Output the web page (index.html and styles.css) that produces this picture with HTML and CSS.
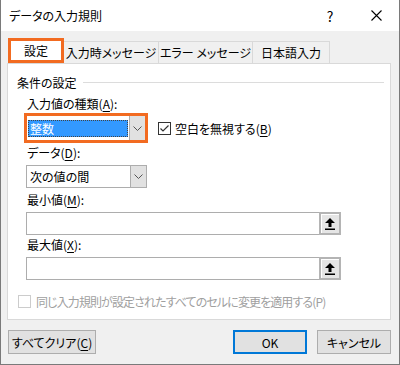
FILE: index.html
```html
<!DOCTYPE html>
<html lang="ja">
<head>
    <meta charset="UTF-8">
    <title>データの入力規則</title>
    <link rel="stylesheet" href="styles.css">
</head>
<body>
    <div class="window">
        <!-- Title bar -->
        <div class="titlebar">
            <div class="title">データの入力規則</div>
            <div class="tb-btn">?</div>
            <div class="tb-btn">
                <svg width="11" height="11" viewBox="0 0 11 11"><path d="M0.5 0.5 L10.5 10.5 M10.5 0.5 L0.5 10.5" stroke="#000" stroke-width="1.1" fill="none"/></svg>
            </div>
        </div>

        <div class="dialog">
            <!-- Tabs -->
            <div class="tabs">
                <div class="tab active">設定</div>
                <div class="tab w1">入力時メッセージ</div>
                <div class="tab w2">エラー メッセージ</div>
                <div class="tab w3">日本語入力</div>
            </div>

            <!-- Tab panel -->
            <div class="panel">
                <div class="legend">
                    <span>条件の設定</span>
                    <div class="rule"></div>
                </div>

                <div class="label">入力値の種類(<u>A</u>):</div>
                <div class="combo-row">
                    <div class="highlight">
                        <div class="combo">
                            <div class="value"><span class="sel">整数</span></div>
                            <div class="drop">
                                <svg width="9" height="5" viewBox="0 0 9 5"><path d="M0.5 0.5 L4.5 4.5 L8.5 0.5" stroke="#555" fill="none"/></svg>
                            </div>
                        </div>
                    </div>
                    <div class="check">
                        <svg width="13" height="13" viewBox="0 0 13 13"><rect x="0.5" y="0.5" width="12" height="12" fill="#fff" stroke="#333"/><path d="M2.5 6.5 L5 9 L10.5 3.5" stroke="#333" stroke-width="1.2" fill="none"/></svg>
                    </div>
                    <span class="check-text">空白を無視する(<u>B</u>)</span>
                </div>

                <div class="label gap-s">データ(<u>D</u>):</div>
                <div class="combo plain">
                    <div class="value">次の値の間</div>
                    <div class="drop">
                        <svg width="9" height="5" viewBox="0 0 9 5"><path d="M0.5 0.5 L4.5 4.5 L8.5 0.5" stroke="#555" fill="none"/></svg>
                    </div>
                </div>

                <div class="label gap-m">最小値(<u>M</u>):</div>
                <div class="ref-input">
                    <div class="field"></div>
                    <div class="ref-btn">
                        <svg width="10" height="12" viewBox="0 0 10 12"><path d="M5 0 L10 5 L6.5 5 L6.5 9 L3.5 9 L3.5 5 L0 5 Z" fill="#000"/><rect x="0" y="10.5" width="10" height="1.5" fill="#000"/></svg>
                    </div>
                </div>

                <div class="label gap-s">最大値(<u>X</u>):</div>
                <div class="ref-input">
                    <div class="field"></div>
                    <div class="ref-btn">
                        <svg width="10" height="12" viewBox="0 0 10 12"><path d="M5 0 L10 5 L6.5 5 L6.5 9 L3.5 9 L3.5 5 L0 5 Z" fill="#000"/><rect x="0" y="10.5" width="10" height="1.5" fill="#000"/></svg>
                    </div>
                </div>

                <div class="apply-row">
                    <div class="box-off"></div>
                    <span class="apply-text">同じ入力規則が設定されたすべてのセルに変更を適用する(P)</span>
                </div>
            </div>

            <!-- Buttons -->
            <div class="footer">
                <button class="btn wide">すべてクリア(<u>C</u>)</button>
                <div class="spacer"></div>
                <button class="btn default">OK</button>
                <button class="btn">キャンセル</button>
            </div>
        </div>
    </div>
</body>
</html>
```

FILE: styles.css
```css
body {
    margin: 0;
    font-family: "Noto Sans CJK JP", "Noto Sans", sans-serif;
    font-size: 12px;
    font-feature-settings: "palt";
    color: #000;
}

u {
    text-decoration: underline;
    text-underline-offset: 2px;
}

/* Window frame */
.window {
    width: 400px;
    height: 365px;
    box-sizing: border-box;
    border: 1px solid #7a7a7a;
    border-top: none;
    background-color: #f0f0f0;
}

.titlebar {
    height: 31px;
    background-color: #fff;
    display: flex;
    align-items: center;
}

.title {
    flex: 1;
    padding-left: 8px;
    font-size: 12px;
}

.tb-btn {
    width: 46px;
    height: 31px;
    display: flex;
    align-items: center;
    justify-content: center;
    font-size: 14px;
}

.dialog {
    padding: 0 8px 0 6px;
}

/* Tabs */
.tabs {
    display: flex;
    align-items: flex-end;
    height: 25px;
    margin-top: 7px;
    padding-left: 1px;
}

.tab {
    height: 22px;
    box-sizing: border-box;
    border: 1px solid #d9d9d9;
    border-bottom: none;
    margin-left: -1px;
    display: flex;
    align-items: center;
    justify-content: center;
    background-color: #f0f0f0;
}

.tab.active {
    width: 56px;
    height: 25px;
    margin-left: 0;
    border: 3px solid #f26b21;
    background-color: #fff;
    position: relative;
    z-index: 1;
}

.tab.w1 { width: 96px; }
.tab.w2 { width: 95px; }
.tab.w3 { width: 78px; }

/* Panel */
.panel {
    height: 257px;
    box-sizing: border-box;
    background-color: #fff;
    border: 1px solid #d9d9d9;
    padding-left: 1px;
}

.legend {
    display: flex;
    align-items: center;
    height: 14px;
    margin-top: 11px;
    padding-left: 8px;
}

.rule {
    flex: 1;
    height: 1px;
    background-color: #dcdcdc;
    margin: 0 6px 0 6px;
}

.label {
    height: 14px;
    line-height: 14px;
    margin-top: 8px;
    padding-left: 18px;
}

.label.gap-s { margin-top: 3px; }
.label.gap-m { margin-top: 5px; }

.combo-row {
    display: flex;
    align-items: center;
    margin-top: 2px;
    margin-left: 15px;
}

.highlight {
    border: 3px solid #f26b21;
    padding: 0;
}

.combo {
    display: flex;
    width: 118px;
    height: 24px;
    box-sizing: border-box;
    background-color: #fff;
}

.combo .value {
    flex: 1;
    display: flex;
    align-items: center;
    padding: 0 1px;
}

.sel {
    display: block;
    width: 100%;
    height: 17px;
    line-height: 17px;
    background-color: #3399ff;
    color: #fff;
    padding-left: 2px;
    outline: 1px dotted #444;
    outline-offset: -1px;
}

.drop {
    width: 15px;
    display: flex;
    align-items: center;
    justify-content: center;
    background-color: #e1e1e1;
    border-left: 1px solid #adadad;
}

.combo.plain {
    width: 121px;
    height: 23px;
    margin: 5px 0 0 17px;
    border: 1px solid #adadad;
}

.combo.plain .value {
    padding-left: 3px;
}

.check {
    display: flex;
    margin-left: 10px;
}

.check-text {
    margin-left: 4px;
}

/* Range inputs */
.ref-input {
    display: flex;
    width: 315px;
    height: 23px;
    margin: 5px 0 0 17px;
}

.field {
    flex: 1;
    border: 1px solid #adadad;
    border-right: none;
    background-color: #fff;
}

.ref-btn {
    width: 22px;
    box-sizing: border-box;
    border: 2px solid #b4b4b4;
    background-color: #e5e5e5;
    display: flex;
    align-items: center;
    justify-content: center;
    box-shadow: inset 1px 1px 0 #fff;
}

.apply-row {
    display: flex;
    align-items: center;
    margin-top: 13px;
    padding-left: 9px;
    color: #a0a0a0;
}

.apply-text {
    letter-spacing: -0.9px;
}

.box-off {
    width: 11px;
    height: 11px;
    border: 1px solid #cccccc;
    margin-right: 5px;
}

/* Footer buttons */
.footer {
    display: flex;
    margin-top: 10px;
    padding-left: 1px;
}

.spacer {
    flex: 1;
}

.btn {
    width: 74px;
    height: 24px;
    margin: 0;
    padding: 0;
    font-family: inherit;
    font-size: 12px;
    font-feature-settings: "palt";
    background-color: #e1e1e1;
    border: 1px solid #adadad;
    color: #000;
}

.btn.wide {
    width: 88px;
}

.btn.default {
    border: 2px solid #0078d7;
    margin-right: 10px;
}
```
